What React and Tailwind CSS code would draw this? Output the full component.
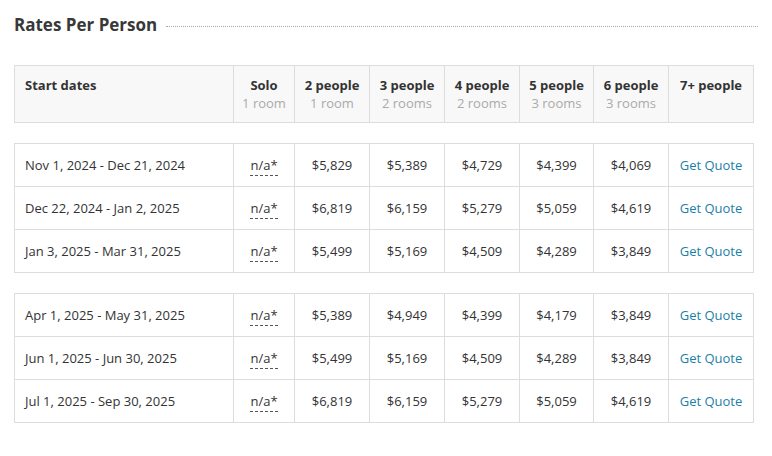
import React from "react";

const cols = [
  { label: "Solo", sub: "1 room", w: "w-[61px]" },
  { label: "2 people", sub: "1 room", w: "w-[75px]" },
  { label: "3 people", sub: "2 rooms", w: "w-[75px]" },
  { label: "4 people", sub: "2 rooms", w: "w-[75px]" },
  { label: "5 people", sub: "3 rooms", w: "w-[74px]" },
  { label: "6 people", sub: "3 rooms", w: "w-[75px]" },
  { label: "7+ people", sub: "", w: "w-[85px]" },
];

const groups = [
  [
    ["Nov 1, 2024 - Dec 21, 2024", "$5,829", "$5,389", "$4,729", "$4,399", "$4,069"],
    ["Dec 22, 2024 - Jan 2, 2025", "$6,819", "$6,159", "$5,279", "$5,059", "$4,619"],
    ["Jan 3, 2025 - Mar 31, 2025", "$5,499", "$5,169", "$4,509", "$4,289", "$3,849"],
  ],
  [
    ["Apr 1, 2025 - May 31, 2025", "$5,389", "$4,949", "$4,399", "$4,179", "$3,849"],
    ["Jun 1, 2025 - Jun 30, 2025", "$5,499", "$5,169", "$4,509", "$4,289", "$3,849"],
    ["Jul 1, 2025 - Sep 30, 2025", "$6,819", "$6,159", "$5,279", "$5,059", "$4,619"],
  ],
];

const ColGroup = () => (
  <colgroup>
    <col className="w-[219px]" />
    {cols.map((c) => (
      <col key={c.label} className={c.w} />
    ))}
  </colgroup>
);

const td = "border border-[#dddddd] h-[43px] pt-[2px] text-center align-middle";

const App = () => {
  return (
    <div className="w-[772px] h-[456px] bg-white px-[14px] pt-[13px] font-['Open_Sans',sans-serif] text-[13px] text-[#333333]">
      <div className="flex items-center gap-[9px]">
        <h2 className="text-[17px] font-bold leading-[24px] text-[#383838]">Rates Per Person</h2>
        <div className="flex-1 border-t border-dotted border-[#aaaaaa] mt-[2px]" />
      </div>

      <table className="mt-[28px] w-[740px] table-fixed border-collapse">
        <ColGroup />
        <thead>
          <tr className="bg-[#f8f8f8] h-[57px]">
            <th className="border border-[#dddddd] text-left align-top pl-[10px] pt-[10px] font-bold leading-[18px]">
              Start dates
            </th>
            {cols.map((c) => (
              <th key={c.label} className="border border-[#dddddd] align-top pt-[10px] font-bold leading-[18px]">
                <div>{c.label}</div>
                {c.sub && <div className="font-normal text-[#aaaaaa] leading-[18px]">{c.sub}</div>}
              </th>
            ))}
          </tr>
        </thead>
      </table>

      {groups.map((rows, gi) => (
        <table key={gi} className="mt-[20px] w-[740px] table-fixed border-collapse">
          <ColGroup />
          <tbody>
            {rows.map((r) => (
              <tr key={r[0]}>
                <td className="border border-[#dddddd] h-[43px] pt-[2px] pl-[10px] align-middle">{r[0]}</td>
                <td className={td}>
                  <span className="border-b border-dashed border-[#555555] pb-[1px]">n/a*</span>
                </td>
                {r.slice(1).map((p, i) => (
                  <td key={i} className={td}>
                    {p}
                  </td>
                ))}
                <td className={`${td} text-[#1a7fa6]`}>Get Quote</td>
              </tr>
            ))}
          </tbody>
        </table>
      ))}
    </div>
  );
};

export default App;
